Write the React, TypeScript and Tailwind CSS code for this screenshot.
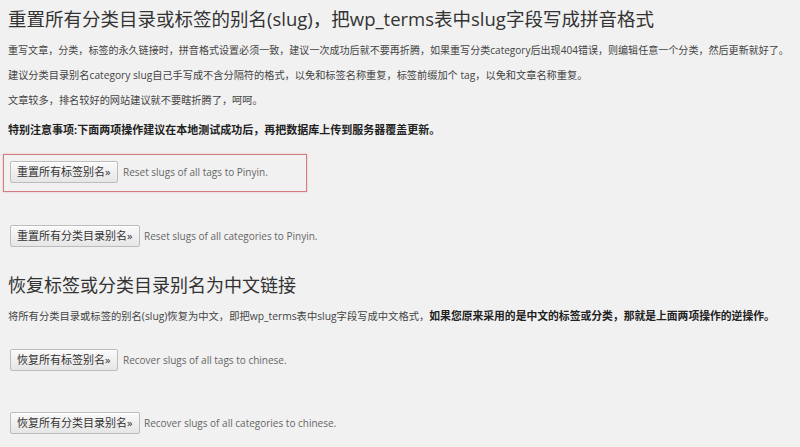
import React from "react";

const font = { fontFamily: '"Open Sans", "Noto Sans CJK SC", sans-serif' };

function Btn({ label, w }: { label: string; w: string }) {
  return (
    <button
      className={`${w} h-[22px] shrink-0 border border-[#bcbcbc] rounded-[2px] bg-gradient-to-b from-[#fafafa] to-[#e6e6e6] text-[11px] leading-[20px] text-[#333] text-left pl-[6px] shadow-[inset_0_1px_0_#fff]`}
    >
      {label}
    </button>
  );
}

export default function App() {
  return (
    <div style={font} className="w-[800px] h-[447px] bg-[#f1f1f1] overflow-hidden text-[#444]">
      <div className="pl-[8px] flex flex-col">
        <h2 className="mt-[8px] text-[18.5px] leading-[22px] text-[#333] font-normal whitespace-nowrap">
          重置所有分类目录或标签的别名(slug)，把wp_terms表中slug字段写成拼音格式
        </h2>
        <p className="mt-[14px] text-[10.05px] leading-[12px] whitespace-nowrap">
          重写文章，分类，标签的永久链接时，拼音格式设置必须一致，建议一次成功后就不要再折腾，如果重写分类category后出现404错误，则编辑任意一个分类，然后更新就好了。
        </p>
        <p className="mt-[13px] text-[10.2px] leading-[12px] whitespace-nowrap">
          建议分类目录别名category slug自己手写成不含分隔符的格式，以免和标签名称重复，标签前缀加个 tag，以免和文章名称重复。
        </p>
        <p className="mt-[13px] text-[10.2px] leading-[12px] whitespace-nowrap">
          文章较多，排名较好的网站建议就不要瞎折腾了，呵呵。
        </p>
        <p className="mt-[18px] text-[11px] leading-[12px] font-bold text-[#222] whitespace-nowrap">
          特别注意事项:下面两项操作建议在本地测试成功后，再把数据库上传到服务器覆盖更新。
        </p>
        <div className="mt-[18px] -ml-[5px] w-[304px] h-[38px] border border-[#d77a82] shadow-[0_0_2px_rgba(200,80,90,0.35)] flex items-start pt-[6px] pl-[6px]">
          <Btn label="重置所有标签别名»" w="w-[108px]" />
          <span className="ml-[5px] text-[10px] leading-[22px] text-[#666] whitespace-nowrap">
            Reset slugs of all tags to Pinyin.
          </span>
        </div>
        <div className="mt-[33px] ml-[2px] flex items-center">
          <Btn label="重置所有分类目录别名»" w="w-[130px]" />
          <span className="ml-[4px] text-[10px] leading-[22px] text-[#666] whitespace-nowrap">
            Reset slugs of all categories to Pinyin.
          </span>
        </div>
        <h2 className="mt-[27px] text-[18px] leading-[22px] text-[#333] font-normal whitespace-nowrap">
          恢复标签或分类目录别名为中文链接
        </h2>
        <p className="mt-[14px] text-[10.3px] leading-[12px] whitespace-nowrap">
          将所有分类目录或标签的别名(slug)恢复为中文，即把wp_terms表中slug字段写成中文格式，
          <b className="text-[#222] text-[10.8px]">如果您原来采用的是中文的标签或分类，那就是上面两项操作的逆操作。</b>
        </p>
        <div className="mt-[27px] ml-[2px] flex items-center">
          <Btn label="恢复所有标签别名»" w="w-[108px]" />
          <span className="ml-[5px] text-[10px] leading-[22px] text-[#666] whitespace-nowrap">
            Recover slugs of all tags to chinese.
          </span>
        </div>
        <div className="mt-[41px] ml-[2px] flex items-center">
          <Btn label="恢复所有分类目录别名»" w="w-[130px]" />
          <span className="ml-[4px] text-[10px] leading-[22px] text-[#666] whitespace-nowrap">
            Recover slugs of all categories to chinese.
          </span>
        </div>
      </div>
    </div>
  );
}
